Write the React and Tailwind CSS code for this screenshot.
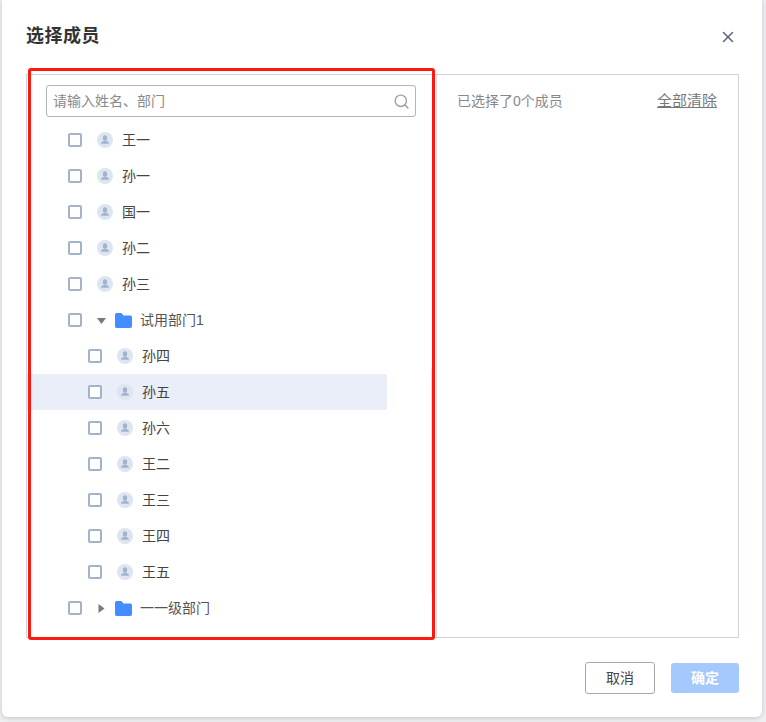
import React from "react";
import { X, Search } from "lucide-react";

const font = { fontFamily: '"Liberation Sans", "Noto Sans CJK SC", sans-serif' };

const tree = [
  { id: 1, type: "user", name: "王一", depth: 0 },
  { id: 2, type: "user", name: "孙一", depth: 0 },
  { id: 3, type: "user", name: "国一", depth: 0 },
  { id: 4, type: "user", name: "孙二", depth: 0 },
  { id: 5, type: "user", name: "孙三", depth: 0 },
  { id: 6, type: "dept", name: "试用部门1", depth: 0, open: true },
  { id: 7, type: "user", name: "孙四", depth: 1 },
  { id: 8, type: "user", name: "孙五", depth: 1, active: true },
  { id: 9, type: "user", name: "孙六", depth: 1 },
  { id: 10, type: "user", name: "王二", depth: 1 },
  { id: 11, type: "user", name: "王三", depth: 1 },
  { id: 12, type: "user", name: "王四", depth: 1 },
  { id: 13, type: "user", name: "王五", depth: 1 },
  { id: 14, type: "dept", name: "一一级部门", depth: 0 },
  // only the top of the folder shows above the panel edge
  { id: 15, type: "dept", name: "", depth: 0 },
];

const Avatar = () => (
  <svg width="16" height="16" viewBox="0 0 16 16" className="shrink-0">
    <circle cx="8" cy="8" r="8" fill="#dde5f0" />
    <ellipse cx="8" cy="6" rx="2.200" ry="2.800" fill="#a3b3cc" />
    <path d="M4 11.800c0-2 1.800-3 4-3s4 1 4 3z" fill="#a3b3cc" />
  </svg>
);

const Folder = () => (
  <svg width="17" height="15" viewBox="0 0 17 15" className="shrink-0">
    <path
      d="M0 2c0-1.100.7-2 1.700-2h4c.6 0 1 .2 1.400.7L8.400 2.400h6.900c1 0 1.700.8 1.700 1.800v8.800c0 1.100-.7 2-1.700 2H1.700C.7 15 0 14.100 0 13z"
      fill="#448dff"
    />
  </svg>
);

const Caret = ({ open }) => (
  <svg width="9" height="9" viewBox="0 0 9 9" className="shrink-0">
    {open ? <path d="M0 2h9L4.500 8z" fill="#7a7a7a" /> : <path d="M1.500 0v9l6-4.500z" fill="#7a7a7a" />}
  </svg>
);

const Row = ({ item }) => (
  <div className={`h-9 shrink-0 flex items-center w-[360px] ${item.active ? "bg-[#e9eef8]" : ""} ${item.depth ? "pl-[61px]" : "pl-[41px]"}`}>
    <span className="w-3.5 h-3.5 shrink-0 rounded-[2px] border-2 border-[#a3b4c8] bg-white" />
    {item.type === "user" ? (
      <>
        <span className="ml-[15px]"><Avatar /></span>
        <span className="ml-[9px] text-sm text-[#444444]">{item.name}</span>
      </>
    ) : (
      <>
        <span className="ml-[15px] flex"><Caret open={item.open} /></span>
        <span className="ml-[9px] flex"><Folder /></span>
        <span className="ml-2 text-sm text-[#555555]">{item.name}</span>
      </>
    )}
  </div>
);

const App = () => {
  return (
    <div className="h-[722px] w-[766px] bg-[#eeeff2] overflow-hidden" style={font}>
      <div className="relative w-[760px] h-[717px] ml-[2px] bg-white rounded-b-md flex flex-col pl-6 pr-[23px] shadow-[0_1px_5px_rgba(0,0,0,0.18)]">
        <div className="h-[74px] shrink-0 flex items-start justify-between">
          <h1 className="mt-6 text-lg leading-6 font-bold tracking-[0.5px] text-[#333333]">选择成员</h1>
          <X className="mt-7 mr-[2px] w-[18px] h-[18px] text-[#5c6477]" strokeWidth={2} />
        </div>

        <div className="h-[564px] shrink-0 flex border border-[#cfd3dc] overflow-hidden">
          <div className="relative w-[410px] shrink-0 border-r border-[#d8dbe2] flex flex-col overflow-hidden">
            <div className="mt-[10px] ml-[19px] w-[370px] h-8 shrink-0 flex items-center justify-between rounded-[3px] border border-[#b4b4b4] pl-[6px] pr-[5px]">
              <span className="text-sm text-[#8a8a8a]">请输入姓名、部门</span>
              <Search className="w-[17px] h-[17px] text-[#a0a0a0]" strokeWidth={2} />
            </div>
            <div className="mt-[5px] flex flex-col">
              {tree.map((item) => (
                <Row key={item.id} item={item} />
              ))}
            </div>
            <span className="absolute left-[404px] top-[294px] w-[4px] h-[224px] bg-[#dfe1e6]" />
          </div>

          <div className="flex-1 flex items-start justify-between pl-5 pr-[21px] pt-[16px]">
            <span className="text-sm leading-5 text-[#888888]">已选择了0个成员</span>
            <span className="text-[15px] leading-5 text-[#777777] underline">全部清除</span>
          </div>
        </div>

        <div className="flex-1 flex justify-end items-start pt-6 gap-4">
          <button className="w-[70px] h-8 rounded-[3px] border border-[#a8a8a8] bg-white text-sm text-[#444444]">取消</button>
          <button className="w-[68px] h-[30px] mt-px rounded-[3px] bg-[#a5c9fd] text-sm font-bold text-white">确定</button>
        </div>

        {/* red annotation over the left panel */}
        <div className="absolute left-[26px] top-[68px] w-[407px] h-[572px] border-[3px] border-[#fb1a10] rounded-[3px] pointer-events-none" />
      </div>
    </div>
  );
};

export default App;
